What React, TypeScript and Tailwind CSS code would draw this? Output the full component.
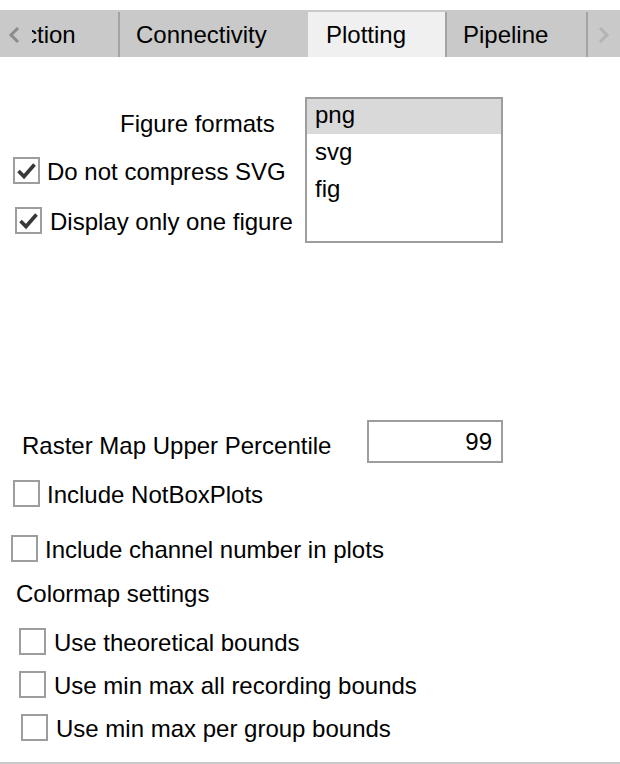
import React from "react";

const font = "font-['Liberation_Sans',Arial,sans-serif]";

function Box({ checked = false }: { checked?: boolean }) {
  return (
    <div className="flex h-[27px] w-[27px] shrink-0 items-center justify-center border-2 border-[#9d9d9d] bg-white">
      {checked && (
        <svg width="23" height="23" viewBox="0 0 23 23">
          <path d="M3.5 12 L9 17.5 L19.5 5.5" fill="none" stroke="#383838" strokeWidth="3.6" strokeLinecap="butt" strokeLinejoin="miter" />
        </svg>
      )}
    </div>
  );
}

function Check({ label, checked, indent, gap = "gap-[7px]", className = "" }: { label: string; checked?: boolean; indent: string; gap?: string; className?: string }) {
  return (
    <div className={`flex h-[27px] items-center ${gap} ${indent} ${className}`}>
      <Box checked={checked} />
      <span className="pt-[3px] leading-[28px] whitespace-nowrap">{label}</span>
    </div>
  );
}

export default function App() {
  return (
    <div className={`flex h-[764px] w-[620px] flex-col overflow-hidden bg-white text-[24px] text-black ${font}`}>
      {/* Tab strip */}
      <div className="mt-[10px] flex h-[47px] items-stretch bg-[#c9c9c9] pt-[2px]">
        <div className="flex w-[118px] items-center">
          <svg width="14" height="18" viewBox="0 0 14 18" className="ml-[7px] shrink-0">
            <path d="M11 2 L4 9 L11 16" fill="none" stroke="#8c8c8c" strokeWidth="3" />
          </svg>
          <div className="ml-[11px] w-[86px] overflow-hidden">
            <span className="-ml-[7px] block leading-[28px] whitespace-nowrap">ction</span>
          </div>
        </div>
        <div className="w-[2px] bg-[#a3a3a3]" />
        <div className="flex w-[188px] items-center pl-[16px]">Connectivity</div>
        <div className="flex w-[137px] items-center bg-[#f0f0f0] pl-[18px]">Plotting</div>
        <div className="w-[2px] bg-[#a3a3a3]" />
        <div className="flex w-[139px] items-center pl-[16px]">Pipeline</div>
        <div className="w-[2px] bg-[#a3a3a3]" />
        <div className="flex flex-1 items-center justify-center">
          <svg width="14" height="18" viewBox="0 0 14 18">
            <path d="M3 2 L10 9 L3 16" fill="none" stroke="#b3b3b3" strokeWidth="3" />
          </svg>
        </div>
      </div>

      {/* Figure formats */}
      <div className="mt-[40px] flex">
        <div className="flex w-[305px] flex-col">
          <div className="mt-[13px] pl-[120px] leading-[28px]">Figure formats</div>
          <Check label="Do not compress SVG" checked indent="pl-[13px]" className="mt-[19px]" />
          <Check label="Display only one figure" checked indent="pl-[15px]" gap="gap-[8px]" className="mt-[23px]" />
        </div>
        <div className="flex h-[146px] w-[198px] flex-col border-2 border-[#9d9d9d]">
          <div className="h-[35px] bg-[#d9d9d9] pl-[8px] leading-[32px]">png</div>
          <div className="mt-[3px] h-[37px] pl-[8px] leading-[30px]">svg</div>
          <div className="h-[37px] pl-[8px] leading-[30px]">fig</div>
        </div>
      </div>

      {/* Raster map */}
      <div className="mt-[177px] flex h-[43px] items-start">
        <span className="mt-[12px] w-[367px] shrink-0 pl-[22px] leading-[28px] whitespace-nowrap">Raster Map Upper Percentile</span>
        <div className="flex h-[43px] w-[136px] items-center justify-end border-2 border-[#9d9d9d] pr-[9px] leading-[28px]">99</div>
      </div>

      <Check label="Include NotBoxPlots" indent="pl-[13px]" className="mt-[17px]" />
      <Check label="Include channel number in plots" indent="pl-[11px]" className="mt-[28px]" />

      <div className="mt-[18px] pl-[16px] leading-[28px]">Colormap settings</div>
      <Check label="Use theoretical bounds" indent="pl-[19px]" gap="gap-[8px]" className="mt-[20px]" />
      <Check label="Use min max all recording bounds" indent="pl-[19px]" gap="gap-[8px]" className="mt-[16px]" />
      <Check label="Use min max per group bounds" indent="pl-[21px]" gap="gap-[8px]" className="mt-[16px]" />

      <div className="flex-1" />
      <div className="h-[2px] bg-[#c9c9c9]" />
    </div>
  );
}
